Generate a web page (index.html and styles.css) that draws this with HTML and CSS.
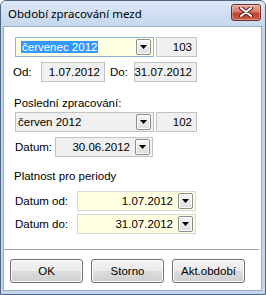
FILE: index.html
```html
<!DOCTYPE html>
<html lang="cs">
<head>
    <meta charset="UTF-8">
    <title>Období zpracování mezd</title>
    <link rel="stylesheet" href="styles.css">
</head>
<body>

<div class="window">
    <div class="titlebar">
        <span class="title">Období zpracování mezd</span>
        <button class="close">
            <svg width="14" height="10" viewBox="0 0 14 10">
                <path d="M2 1 L12 9 M12 1 L2 9" stroke="#5a2018" stroke-width="4" stroke-linecap="round"/>
                <path d="M2 1 L12 9 M12 1 L2 9" stroke="#fff" stroke-width="2" stroke-linecap="round"/>
            </svg>
        </button>
    </div>

    <div class="client">
        <div class="row first">
            <div class="combo focus">
                <span class="combo-text"><span class="sel">červenec 2012</span></span>
                <span class="drop"><svg width="7" height="4" viewBox="0 0 7 4"><path d="M0 0 H7 L3.5 4 Z" fill="#000"/></svg></span>
            </div>
            <div class="box num">103</div>
        </div>
        <div class="row gap5">
            <span class="lbl od">Od:</span>
            <div class="box date-od">1.07.2012</div>
            <span class="lbl do">Do:</span>
            <div class="box date-do">31.07.2012</div>
        </div>

        <div class="caption cap1">Poslední zpracování:</div>
        <div class="row gap2">
            <div class="combo">
                <span class="combo-text">červen 2012</span>
                <span class="drop"><svg width="7" height="4" viewBox="0 0 7 4"><path d="M0 0 H7 L3.5 4 Z" fill="#000"/></svg></span>
            </div>
            <div class="box num">102</div>
        </div>
        <div class="row gap5">
            <span class="lbl datum">Datum:</span>
            <div class="combo datebox">
                <span class="combo-text right">30.06.2012</span>
                <span class="drop"><svg width="7" height="4" viewBox="0 0 7 4"><path d="M0 0 H7 L3.5 4 Z" fill="#000"/></svg></span>
            </div>
        </div>

        <div class="caption cap2">Platnost pro periody</div>
        <div class="row gap8">
            <span class="lbl period">Datum od:</span>
            <div class="combo period-box">
                <span class="combo-text right">1.07.2012</span>
                <span class="drop"><svg width="7" height="4" viewBox="0 0 7 4"><path d="M0 0 H7 L3.5 4 Z" fill="#000"/></svg></span>
            </div>
        </div>
        <div class="row gap3">
            <span class="lbl period">Datum do:</span>
            <div class="combo period-box">
                <span class="combo-text right">31.07.2012</span>
                <span class="drop"><svg width="7" height="4" viewBox="0 0 7 4"><path d="M0 0 H7 L3.5 4 Z" fill="#000"/></svg></span>
            </div>
        </div>

        <div class="separator"></div>

        <div class="buttons">
            <button class="btn">OK</button>
            <button class="btn">Storno</button>
            <button class="btn">Akt.období</button>
        </div>
    </div>
</div>

</body>
</html>
```

FILE: styles.css
```css
* {
    box-sizing: border-box;
}
body {
    margin: 0;
    padding: 0;
    background: #fff;
    font-family: "Liberation Sans", Arial, sans-serif;
    font-size: 11.5px;
    color: #000;
}
.window {
    width: 266px;
    height: 295px;
    border: 1px solid #4d6784;
    border-radius: 6px 6px 0 0;
    background: #c4d6ec;
    padding: 0 3px 3px 2px;
    display: flex;
    flex-direction: column;
}
.titlebar {
    height: 25px;
    display: flex;
    align-items: center;
    justify-content: space-between;
    background: linear-gradient(#dbe7f6, #c6d8ee);
    margin: 0 -3px 0 -2px;
    padding-left: 7px;
    padding-right: 4px;
    border-radius: 5px 5px 0 0;
}
.title {
    font-family: "Noto Sans", sans-serif;
    font-size: 11.5px;
    color: #000;
    margin-top: -1px;
}
.close {
    width: 30px;
    height: 17px;
    margin-top: -3px;
    border: 1px solid #6e2d25;
    border-radius: 3px;
    background: linear-gradient(#e6aa9f, #d47a6a 45%, #c0442f 55%, #c95a40);
    display: flex;
    align-items: center;
    justify-content: center;
    padding: 0;
    box-shadow: inset 0 0 0 1px rgba(255, 255, 255, 0.35);
}
.client {
    flex: 1;
    background: #fff;
    border: 1px solid #98acc4;
    padding: 0 0 0 9px;
    display: flex;
    flex-direction: column;
}
.row {
    display: flex;
    align-items: center;
    height: 20px;
}
.row.first { margin-top: 10px; padding-left: 2px; }
.gap2 { margin-top: 2px; padding-left: 2px; }
.gap3 { margin-top: 3px; }
.gap5 { margin-top: 5px; }
.gap8 { margin-top: 8px; }

.lbl {
    flex: none;
}
.od { width: 28px; }
.do { width: 24px; margin-left: 5px; }
.datum { width: 40px; margin-left: 2px; }
.period { width: 62px; margin-left: 2px; }

.box {
    height: 20px;
    border: 1px solid #c2c2c2;
    background: #f0f0f0;
    display: flex;
    align-items: center;
    justify-content: flex-end;
    padding-right: 4px;
}
.num { width: 41px; margin-left: 2px; }
.date-od { width: 64px; }
.date-do { width: 63px; }

.combo {
    width: 139px;
    height: 20px;
    border: 1px solid #c2c2c2;
    background: #f0f0f0;
    display: flex;
    align-items: center;
    padding: 0 2px 0 0;
}
.combo.focus {
    background: #ffffe1;
    border-color: #8fb3dc;
}
.combo-text {
    flex: 1;
    padding-left: 2px;
    white-space: nowrap;
}
.combo-text.right {
    text-align: right;
    padding-right: 5px;
}
.sel {
    background: #3399ff;
    color: #fff;
    padding: 0 1px;
    margin-left: 3px;
}
.drop {
    width: 15px;
    height: 16px;
    flex: none;
    border: 1px solid #8d8d8d;
    border-radius: 2px;
    background: linear-gradient(#f6f6f6, #dcdcdc);
    display: flex;
    align-items: center;
    justify-content: center;
    box-shadow: inset 0 0 0 1px #fff;
}
.datebox { width: 98px; }
.period-box {
    width: 119px;
    background: #ffffe1;
    border-color: #d8d8d8;
}

.caption {
    height: 14px;
    line-height: 14px;
    padding-left: 1px;
}
.cap1 { margin-top: 14px; }
.cap2 { margin-top: 12px; }

.separator {
    margin: 15px 2px 0 -9px;
    height: 1px;
    background: #a0a0a0;
}
.buttons {
    display: flex;
    gap: 8px;
    margin-top: 9px;
    margin-left: -3px;
}
.btn {
    width: 73px;
    height: 24px;
    border: 1px solid #707070;
    border-radius: 3px;
    background: linear-gradient(#f2f2f2, #ebebeb 50%, #dddddd 50%, #cfcfcf);
    box-shadow: inset 0 0 0 1px #fcfcfc;
    font-family: "Liberation Sans", Arial, sans-serif;
    font-size: 11.5px;
    color: #000;
    padding: 0;
}
```
